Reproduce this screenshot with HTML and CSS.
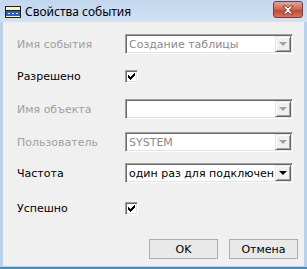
FILE: index.html
```html
<!DOCTYPE html>
<html lang="ru">
  <head>
    <meta charset="UTF-8" />
    <title>Свойства события</title>
    <link rel="stylesheet" href="styles.css">
  </head>
  <body>
    <div class="window">
      <div class="titlebar">
        <svg class="title-icon" width="16" height="12" viewBox="0 0 16 12">
          <rect x="0.5" y="0.5" width="15" height="11" fill="#fff7b0" stroke="#202020"/>
          <rect x="1" y="5" width="14" height="5" fill="#2060d0"/>
          <rect x="3" y="7" width="2" height="1" fill="#fff"/>
          <rect x="7" y="7" width="2" height="1" fill="#fff"/>
          <rect x="11" y="7" width="2" height="1" fill="#fff"/>
          <rect x="1" y="4" width="14" height="1" fill="#202020"/>
        </svg>
        <span class="title-text">Свойства события</span>
        <div class="close-btn">
          <svg width="14" height="10" viewBox="0 0 14 10">
            <path d="M2 1 L5 1 L7 3 L9 1 L12 1 L8.5 5 L12 9 L9 9 L7 7 L5 9 L2 9 L5.5 5 Z" fill="#fff" stroke="#6a2a20" stroke-width="0.8"/>
          </svg>
        </div>
      </div>

      <div class="client">
        <div class="row row-1">
          <span class="label disabled">Имя события</span>
          <div class="combo disabled">
            <span class="combo-text">Создание таблицы</span>
            <span class="drop"><i class="arrow"></i></span>
          </div>
        </div>

        <div class="row row-2">
          <span class="label">Разрешено</span>
          <span class="check">
            <svg width="7" height="7" viewBox="0 0 7 7" shape-rendering="crispEdges">
              <path d="M6 0 H7 V3 H6 V4 H5 V5 H4 V6 H3 V7 H2 V6 H1 V5 H0 V2 H1 V3 H2 V4 H3 V3 H4 V2 H5 V1 H6 Z" fill="#000"/>
            </svg>
          </span>
        </div>

        <div class="row row-3">
          <span class="label disabled">Имя объекта</span>
          <div class="combo disabled">
            <span class="combo-text"></span>
            <span class="drop"><i class="arrow"></i></span>
          </div>
        </div>

        <div class="row row-4">
          <span class="label disabled">Пользователь</span>
          <div class="combo disabled">
            <span class="combo-text">SYSTEM</span>
            <span class="drop"><i class="arrow"></i></span>
          </div>
        </div>

        <div class="row row-5">
          <span class="label">Частота</span>
          <div class="combo">
            <span class="combo-text">один раз для подключен</span>
            <span class="drop"><i class="arrow"></i></span>
          </div>
        </div>

        <div class="row row-6">
          <span class="label">Успешно</span>
          <span class="check">
            <svg width="7" height="7" viewBox="0 0 7 7" shape-rendering="crispEdges">
              <path d="M6 0 H7 V3 H6 V4 H5 V5 H4 V6 H3 V7 H2 V6 H1 V5 H0 V2 H1 V3 H2 V4 H3 V3 H4 V2 H5 V1 H6 Z" fill="#000"/>
            </svg>
          </span>
        </div>

        <div class="buttons">
          <button class="btn">OK</button>
          <button class="btn">Отмена</button>
        </div>
      </div>
    </div>
  </body>
</html>
```

FILE: styles.css
```css
body {
  margin: 0;
  padding: 0;
  font-family: "DejaVu Sans", sans-serif;
  font-size: 11px;
  background-color: #f0f0f0;
}
.window {
  width: 307px;
  height: 269px;
  box-sizing: border-box;
  background-color: #b9d1ea;
  border-bottom: 2px solid #3a8fc8;
  display: flex;
  flex-direction: column;
}
.titlebar {
  height: 22px;
  display: flex;
  align-items: center;
  padding: 0 5px;
  background: linear-gradient(#c2d6ee, #d3e2f4);
}
.title-icon {
  margin-right: 4px;
  margin-top: 1px;
}
.title-text {
  font-family: "Noto Sans", sans-serif;
  font-size: 12px;
  color: #000;
  flex: 1;
}
.close-btn {
  width: 28px;
  height: 15px;
  border: 1px solid #7a3a32;
  border-radius: 3px;
  background: linear-gradient(#e8a598, #d0614c 50%, #c0432f 51%, #d8735e);
  display: flex;
  align-items: center;
  justify-content: center;
  margin-right: -1px;
  margin-top: -3px;
}
.client {
  flex: 1;
  margin: 0 3px 1px 3px;
  background-color: #f0f0f0;
  padding: 12px 0 0 14px;
  display: flex;
  flex-direction: column;
}
.row {
  display: flex;
  align-items: center;
}
.row-2 { margin-top: 16px; }
.row-3 { margin-top: 16px; }
.row-4 { margin-top: 13px; }
.row-5 { margin-top: 11px; }
.row-6 { margin-top: 19px; }
.label {
  width: 108px;
  color: #000;
}
.label.disabled {
  color: #a0a0a0;
}
.combo {
  width: 168px;
  height: 20px;
  box-sizing: border-box;
  border: 1px solid;
  border-color: #a0a0a0 #ffffff #ffffff #a0a0a0;
  box-shadow: inset 1px 1px 0 #696969, inset -1px -1px 0 #e3e3e3;
  background-color: #fff;
  display: flex;
  align-items: center;
  padding: 1px;
}
.combo-text {
  flex: 1;
  padding-left: 2px;
  white-space: nowrap;
  overflow: hidden;
  color: #000;
}
.combo.disabled .combo-text {
  color: #8a8a8a;
}
.drop {
  width: 16px;
  height: 16px;
  box-sizing: border-box;
  border: 1px solid;
  border-color: #e3e3e3 #696969 #696969 #e3e3e3;
  box-shadow: inset 1px 1px 0 #fff, inset -1px -1px 0 #a0a0a0;
  background-color: #f0f0f0;
  display: flex;
  align-items: center;
  justify-content: center;
}
.arrow {
  width: 0;
  height: 0;
  border-left: 4px solid transparent;
  border-right: 4px solid transparent;
  border-top: 4px solid #000;
}
.combo.disabled .arrow {
  border-top-color: #a0a0a0;
}
.check {
  width: 13px;
  height: 13px;
  box-sizing: border-box;
  border: 1px solid;
  border-color: #a0a0a0 #ffffff #ffffff #a0a0a0;
  box-shadow: inset 1px 1px 0 #696969, inset -1px -1px 0 #e3e3e3;
  background-color: #fff;
  display: flex;
  align-items: center;
  justify-content: center;
}
.buttons {
  display: flex;
  justify-content: flex-end;
  gap: 11px;
  margin-top: 24px;
  padding-right: 6px;
}
.btn {
  width: 69px;
  height: 20px;
  border: 1px solid #acacac;
  background-color: #e9e9e9;
  font-family: "DejaVu Sans", sans-serif;
  font-size: 11px;
  color: #000;
  padding: 0;
}
```
